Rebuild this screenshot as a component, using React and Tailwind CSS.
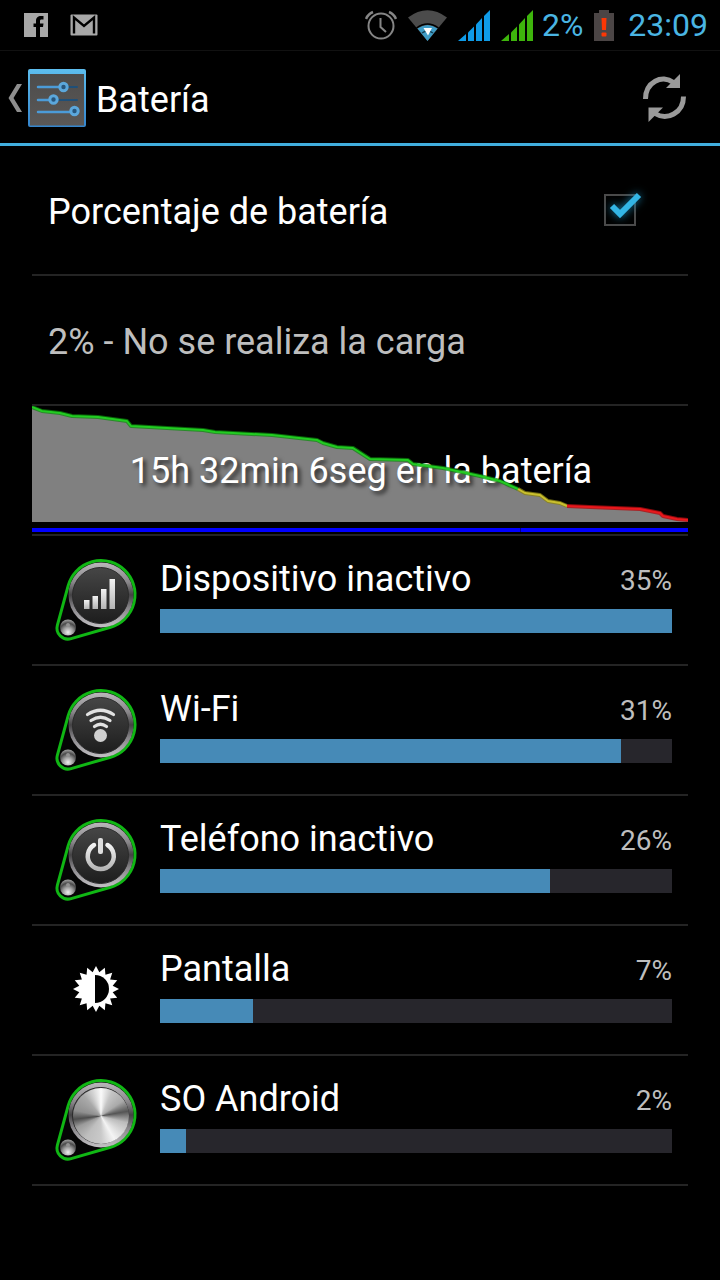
import React, { useState } from "react";

const usage = [
  { name: "Dispositivo inactivo", percent: 35, fill: 100, icon: "signal" },
  { name: "Wi-Fi", percent: 31, fill: 90, icon: "wifi" },
  { name: "Teléfono inactivo", percent: 26, fill: 76.2, icon: "power" },
  { name: "Pantalla", percent: 7, fill: 18.2, icon: "display" },
  { name: "SO Android", percent: 2, fill: 5.1, icon: "android" },
];

const greenLine =
  "0,1 10,5 28,7 40,10 66,11 95,15 99,20 171,24 183,26 240,29 285,34 291,37 305,41 321,42 338,53 376,54 381,58 411,62 448,70 468,75 486,83";
const yellowLine = "486,83 493,87 508,89 516,95 528,97 535,100";
const redLine = "535,100 558,101 608,103 628,107 631,110 645,113 656,114";

function SignalBars({ color }) {
  return (
    <svg viewBox="0 0 32 31" className="h-[31px] w-8" fill={color}>
      <path d="M0 31 L8 24 V31Z" />
      <path d="M10 31 V22.5 L16 16.5 V31Z" />
      <path d="M18 31 V14.5 L24 8 V31Z" />
      <path d="M26 31 V6 L32 0 V31Z" />
    </svg>
  );
}

function StatusBar() {
  return (
    <div className="flex h-[50px] items-center justify-between pl-6 pr-3">
      <div className="flex items-center gap-[22px]">
        <svg viewBox="0 0 24 24" className="size-6">
          <rect width="24" height="24" fill="#a8a8a8" />
          <path
            d="M12 24 V14 H9.5 V10.5 H12 V8 C12 4.5 14 3 17 3 H19.5 V6.5 H17.8 C16.3 6.5 16 7.2 16 8.2 V10.5 H19.5 L19 14 H16 V24Z"
            fill="#000"
          />
        </svg>
        <svg viewBox="0 0 28 22" className="h-[22px] w-7">
          <rect x="0.5" y="0.5" width="27" height="21" rx="1" fill="#a8a8a8" />
          <path d="M4 19.5 V3.5 L14 12 L24 3.5 V19.5" fill="none" stroke="#000" strokeWidth="2.4" />
        </svg>
      </div>

      <div className="flex items-center gap-[11px]">
        <svg viewBox="0 0 32 30" className="h-[30px] w-8" fill="none" stroke="#858585" strokeWidth="2">
          <circle cx="16" cy="16" r="12.5" />
          <path d="M15.5 8 V17 L21 22" />
          <path d="M1 9 Q3 4 8 2 M31 9 Q29 4 24 2" strokeWidth="2.5" />
        </svg>
        <svg viewBox="0 0 39 31" className="h-[31px] w-[39px]">
          <path d="M0 7.5 Q19.5 -7 39 7.5 L19.5 31Z" fill="#4b4b4b" />
          <path d="M9.5 18.5 Q19.5 11.5 29.5 18.5 L19.5 31Z" fill="#3f9cc6" />
          <path d="M8.5 18 Q19.5 10 30.5 18" fill="none" stroke="#000" strokeWidth="1.5" />
          <path d="M14 23 Q19.5 19 25 23" fill="none" stroke="#14455c" strokeWidth="1.5" />
          <path d="M15.5 18 H24 L20 25.5Z" fill="#fff" />
        </svg>
        <SignalBars color="#0f9be8" />
        <SignalBars color="#3eb50c" />
        <span className="-ml-0.5 text-[32px] leading-10 text-[#4ab5e3]">2%</span>
        <svg viewBox="0 0 20 31" className="h-[31px] w-5">
          <path d="M0 3 H5 V0 H15 V3 H20 V31 H0Z" fill="#4b4545" />
          <path d="M7.5 8 H12.5 L12 20 H8Z" fill="#fb3705" />
          <rect x="7.5" y="22.5" width="5" height="4" rx="1" fill="#fb3705" />
        </svg>
        <span className="ml-[3px] text-[32px] leading-10 text-[#4ab5e3]">23:09</span>
      </div>
    </div>
  );
}

function SettingsIcon() {
  return (
    <svg viewBox="0 0 58 58" className="size-[58px]">
      <defs>
        <linearGradient id="settingsFace" x1="0" y1="0" x2="0" y2="1">
          <stop offset="0" stopColor="#4d4c4c" />
          <stop offset="1" stopColor="#5b5856" />
        </linearGradient>
        <linearGradient id="settingsEdge" x1="0" y1="0" x2="0" y2="1">
          <stop offset="0" stopColor="#5dbdee" />
          <stop offset="1" stopColor="#3585cc" />
        </linearGradient>
      </defs>
      <rect width="58" height="58" rx="2" fill="url(#settingsEdge)" />
      <rect x="2" y="5" width="54" height="51.5" fill="url(#settingsFace)" />
      <g strokeWidth="2.5" stroke="#4b9bd8" strokeLinecap="round">
        <path d="M10 18 H31 M10 31 H21 M10 43 H42" />
        <path d="M40 18 H49 M30 31 H49" stroke="#1f4f78" strokeWidth="2" />
      </g>
      <g fill="#27567d" stroke="#5ba7dc" strokeWidth="3">
        <circle cx="35.5" cy="18" r="3.7" />
        <circle cx="25.5" cy="30.5" r="3.7" />
        <circle cx="46.5" cy="42" r="3.7" />
      </g>
    </svg>
  );
}

function Header() {
  return (
    <header className="flex items-center justify-between border-b-[3px] border-[#41aede] pl-2 pr-8 pt-[18px] pb-4">
      <a href="#ajustes" className="flex items-center">
        <svg viewBox="0 0 14 28" className="mr-1.5 h-7 w-3.5" fill="#8e8e8e">
          <path d="M9 0 H14 L5.5 14 L14 28 H9 L0.5 14Z" />
        </svg>
        <SettingsIcon />
        <h1 className="ml-2.5 pt-1 text-4xl text-white">Batería</h1>
      </a>
      <button type="button" aria-label="Actualizar">
        <svg viewBox="0 0 46 50" className="h-[50px] w-[46px]">
          <g fill="none" stroke="#9a9a9a" strokeWidth="5">
            <path d="M3.5 26 C3.5 9 20 1 31.5 9.5" />
            <path d="M41.500 23.5 C41.500 40 25 48 13 40.500" />
          </g>
          <path d="M38 1 L38 15 H24Z" fill="#9a9a9a" />
          <path d="M6.5 49 L6.5 34.5 H21Z" fill="#9a9a9a" />
        </svg>
      </button>
    </header>
  );
}

function DischargeChart() {
  return (
    <div className="relative border-b-2 border-[#242424]">
      <svg viewBox="0 0 656 128" preserveAspectRatio="none" className="block h-32 w-full">
        <polygon
          points={`${greenLine} ${yellowLine} ${redLine} 656,116 0,116`}
          fill="#808080"
        />
        <rect y="122" width="656" height="4" fill="#0000ff" />
        <rect x="488" y="122" width="1" height="4" fill="#00008c" />
      </svg>
      <p className="absolute inset-0 flex items-center justify-center pt-0.5 pl-0.5 text-4xl text-white [text-shadow:3px_3px_4px_#000000b0]">
        15h 32min 6seg en la batería
      </p>
      <svg
        viewBox="0 0 656 128"
        preserveAspectRatio="none"
        className="absolute inset-0 h-32 w-full"
        fill="none"
        strokeLinejoin="round"
      >
        <g strokeWidth="4">
          <polyline points={greenLine} stroke="#0a8a0a" strokeOpacity="0.7" />
          <polyline points={yellowLine} stroke="#8a8214" strokeOpacity="0.8" />
          <polyline points={redLine} stroke="#b00d10" strokeOpacity="0.8" />
        </g>
        <g strokeWidth="2">
          <polyline points={greenLine} stroke="#22cc22" />
          <polyline points={yellowLine} stroke="#c9bf2e" />
          <polyline points={redLine} stroke="#e8181c" />
        </g>
      </svg>
    </div>
  );
}

// round metal button with the green band that loops around the small rivet
function Knob({ children, metal }) {
  return (
    <div className="relative size-24">
      <svg viewBox="0 0 96 96" className="size-24">
        <defs>
          <linearGradient id="ring" x1="0" y1="0" x2="0" y2="1">
            <stop offset="0" stopColor="#b9b7ba" />
            <stop offset="0.3" stopColor="#8a888b" />
            <stop offset="0.5" stopColor="#434244" />
            <stop offset="0.7" stopColor="#88868a" />
            <stop offset="1" stopColor="#c4c2c5" />
          </linearGradient>
          <linearGradient id="face" x1="0" y1="0" x2="0" y2="1">
            <stop offset="0" stopColor="#464646" />
            <stop offset="1" stopColor="#1d1d1d" />
          </linearGradient>
          <linearGradient id="glyph" x1="0" y1="0" x2="0" y2="1">
            <stop offset="0" stopColor="#f2f2f2" />
            <stop offset="1" stopColor="#b4b4b4" />
          </linearGradient>
          <radialGradient id="rivet" cx="0.5" cy="0.8" r="0.8">
            <stop offset="0" stopColor="#f0f0f0" />
            <stop offset="0.4" stopColor="#9c9c9c" />
            <stop offset="0.7" stopColor="#4a4a4a" />
            <stop offset="1" stopColor="#a6a6a6" />
          </radialGradient>
        </defs>
        <path
          d="M20.2 33.6 A34 34 0 1 1 62.5 75.2 L23.1 86.6 A11 11 0 0 1 9.4 73.1Z"
          fill="#050505"
          stroke="#10b714"
          strokeWidth="3"
        />
        <circle cx="53" cy="43" r="32.5" fill="url(#ring)" />
        <circle cx="52.5" cy="43.5" r="28" fill="url(#face)" stroke="#2a2a2a" />
        <circle cx="20" cy="75.5" r="8" fill="url(#rivet)" />
        <circle cx="20" cy="73" r="2" fill="#929292" />
        {children}
      </svg>
      {metal && (
        <span className="absolute left-[25px] top-4 size-14 rounded-full bg-[conic-gradient(#fafafa_0deg,#c4c4c4_25deg,#aaaaaa_55deg,#555555_80deg,#bcbcbc_105deg,#f4f4f4_150deg,#c9c9c9_180deg,#bebebe_215deg,#9b9b9b_245deg,#4d4d4d_263deg,#8f8f8f_282deg,#a9a9a9_320deg,#fafafa_360deg)]" />
      )}
    </div>
  );
}

function SunIcon() {
  const points = [];
  for (let i = 0; i < 32; i++) {
    const r = i % 2 === 0 ? 23 : 17;
    const a = (i * Math.PI) / 16 - Math.PI / 2;
    points.push(`${48 + r * Math.cos(a)},${47 + r * Math.sin(a)}`);
  }
  return (
    <svg viewBox="0 0 96 96" className="size-24">
      <polygon points={points.join(" ")} fill="#fff" />
      <path d="M47 33 A14 14 0 0 1 47 61Z" fill="#000" />
    </svg>
  );
}

function UsageIcon({ type }) {
  if (type === "signal") {
    return (
      <Knob>
        <g fill="url(#glyph)">
          <rect x="36" y="48" width="5.5" height="9" />
          <rect x="44.5" y="44" width="5.5" height="13" />
          <rect x="53" y="37" width="5.5" height="20" />
          <rect x="61.5" y="27" width="5.5" height="30" />
        </g>
      </Knob>
    );
  }
  if (type === "wifi") {
    return (
      <Knob>
        <g fill="none" stroke="#e2e2e2" strokeWidth="3.2" strokeLinecap="round">
          <path d="M39.5 32.5 Q52.5 24 65.5 32.5" />
          <path d="M43 38.5 Q52.5 32 62 38.5" />
          <path d="M46.5 44.5 Q52.5 40 58.5 44.5" />
        </g>
        <circle cx="52.5" cy="53.5" r="6.5" fill="#d0d0d0" />
      </Knob>
    );
  }
  if (type === "power") {
    return (
      <Knob>
        <path
          d="M46 33 A13 13 0 1 0 59.5 33"
          fill="none"
          stroke="url(#glyph)"
          strokeWidth="4.5"
          strokeLinecap="round"
        />
        <rect x="50" y="26" width="5" height="16" rx="2" fill="#dddddd" />
      </Knob>
    );
  }
  if (type === "display") return <SunIcon />;
  return <Knob metal />;
}

function UsageRow({ item }) {
  return (
    <li className="flex items-center border-b-2 border-[#242424] py-4 pr-4">
      <div className="mx-4 shrink-0">
        <UsageIcon type={item.icon} />
      </div>
      <div className="flex-1 pb-2">
        <div className="flex items-end justify-between">
          <span className="text-4xl text-white">{item.name}</span>
          <span className="text-[28px] leading-9 text-[#bebebe]">{item.percent}%</span>
        </div>
        <div
          role="progressbar"
          aria-label={item.name}
          aria-valuenow={item.percent}
          className="mt-2.5 h-6 bg-[#27262c]"
        >
          <div className="h-full bg-[#468ab7]" style={{ width: `${item.fill}%` }} />
        </div>
      </div>
    </li>
  );
}

export default function App() {
  const [showPercent, setShowPercent] = useState(true);

  return (
    <div className="min-h-screen bg-black font-[Roboto,sans-serif]">
      <StatusBar />
      <div className="h-px bg-[#111111]" />
      <Header />
      <main className="px-8">
        <label className="flex min-h-[130px] items-center justify-between border-b-2 border-[#242424] pl-4 pr-[52px]">
          <span className="pt-1 text-4xl text-white">Porcentaje de batería</span>
          <span className="relative size-8">
            <input
              type="checkbox"
              checked={showPercent}
              onChange={(e) => setShowPercent(e.target.checked)}
              className="block size-8 appearance-none border-2 border-[#4a4a4a] bg-black"
            />
            {showPercent && (
              <svg
                viewBox="0 0 40 40"
                className="pointer-events-none absolute -top-1 left-0 size-10 drop-shadow-[0_0_4px_#1880aa]"
              >
                <path d="M8 16 L16 24 L35 5" fill="none" stroke="#33b5e5" strokeWidth="6" />
              </svg>
            )}
          </span>
        </label>
        <div className="flex min-h-[130px] items-center border-b-2 border-[#242424] pl-4">
          <p className="pt-1 text-4xl text-[#bebebe]">2% - No se realiza la carga</p>
        </div>
        <DischargeChart />
        <ul>
          {usage.map((item) => (
            <UsageRow key={item.name} item={item} />
          ))}
        </ul>
      </main>
    </div>
  );
}
